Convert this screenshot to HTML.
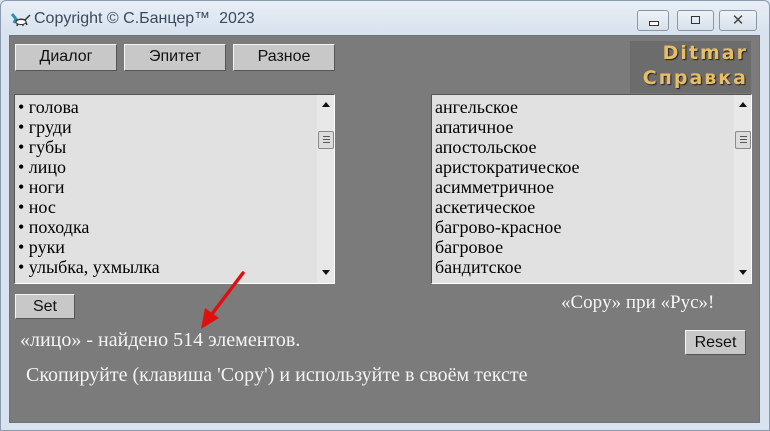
<!DOCTYPE html>
<html><head><meta charset="utf-8"><style>
*{margin:0;padding:0;box-sizing:border-box}
body{width:770px;height:431px;background:#dce6f2;position:relative;overflow:hidden;font-family:"Liberation Sans",sans-serif}
.frame{position:absolute;left:0;top:0;width:770px;height:431px;border:1px solid #8a9bb0;border-radius:6px 6px 0 0;background:linear-gradient(#e8eef6,#d9e3ef 30px,#d9e3ef)}
.title{position:absolute;left:34px;top:10px;font-size:16px;color:#3a4a5e}
.client{position:absolute;left:9px;top:35px;width:751px;height:388px;background:#7b7b7b;border:1px solid #6a7380}
.wb{position:absolute;top:10px;height:21px;border:1px solid #8a96a6;border-radius:3px;background:linear-gradient(#eef3f9,#d7e0ea)}
.btn{position:absolute;background:#c8c8c8;border:1px solid;border-color:#f4f4f4 #555 #555 #f4f4f4;font-size:16px;text-align:center;color:#111;line-height:24px}
.list{position:absolute;top:94px;width:321px;height:190px;background:#e1e1e1;border:1px solid;border-color:#555 #fff #fff #555;font-family:"Liberation Serif",serif;font-size:18px;color:#000}
.list div.it{height:20px;line-height:20px;padding-left:3px;white-space:nowrap}
.items{padding-top:2px}
.sb{position:absolute;right:0;top:0;width:17px;height:188px;background:#e8e8e8}
.sb .up,.sb .dn{position:absolute;left:5px;width:0;height:0;border-left:4px solid transparent;border-right:4px solid transparent}
.sb .up{top:7px;border-bottom:5px solid #111}
.sb .dn{bottom:8px;border-top:5px solid #111}
.thumb{position:absolute;left:1px;top:36px;width:16px;height:18px;background:#dcdcdc;border:1px solid #888;border-radius:2px}
.thumb i{position:absolute;left:4px;width:7px;height:1px;background:#555}
.txt{position:absolute;font-family:"Liberation Serif",serif;color:#f4f4f4;font-size:20px;white-space:nowrap}
.logo{position:absolute;left:630px;top:41px;width:121px;height:52px;background:#6c6c6c;font-family:"DejaVu Sans",sans-serif;font-weight:bold;color:#e8bd66;text-shadow:1px 1px 1px #222;letter-spacing:2px;font-size:19px;line-height:25px;text-align:right;padding-right:3px}
</style></head><body>
<div class="frame"></div>
<svg style="position:absolute;left:10px;top:11px" width="22" height="18" viewBox="0 0 22 18"><path d="M2 3 L6 8 L4 12" stroke="#2a8fb0" stroke-width="3" fill="none"/><path d="M6 10 Q10 7 15 9 L18 6 L20 4 M15 9 L17 14 M8 11 L7 15 M12 11 L13 15" stroke="#333" stroke-width="1.5" fill="none"/><ellipse cx="11" cy="11" rx="5" ry="2.5" fill="#fff" stroke="#333"/></svg>
<div class="title">Copyright © С.Банцер™&nbsp; 2023</div>
<div class="wb" style="left:637px;width:32px"><div style="position:absolute;left:11px;top:10px;width:10px;height:5px;border:1px solid #333;background:#fff"></div></div>
<div class="wb" style="left:677px;width:37px"><div style="position:absolute;left:13px;top:5px;width:9px;height:8px;border:1px solid #333"></div></div>
<div class="wb" style="left:719px;width:38px;text-align:center;font-size:15px;line-height:19px;color:#444">✕</div>
<div class="client"></div>
<div class="btn" style="left:15px;top:44px;width:102px;height:27px">Диалог</div>
<div class="btn" style="left:124px;top:44px;width:102px;height:27px">Эпитет</div>
<div class="btn" style="left:233px;top:44px;width:102px;height:27px">Разное</div>
<div class="logo">Ditmar<br>Справка</div>
<div class="list" style="left:14px">
<div class="items"><div class="it">• голова</div><div class="it">• груди</div><div class="it">• губы</div><div class="it">• лицо</div><div class="it">• ноги</div><div class="it">• нос</div><div class="it">• походка</div><div class="it">• руки</div><div class="it">• улыбка, ухмылка</div></div>
<div class="sb"><div class="up"></div><div class="thumb"><i style="top:4px"></i><i style="top:7px"></i><i style="top:10px"></i></div><div class="dn"></div></div>
</div>
<div class="list" style="left:431px">
<div class="items"><div class="it">ангельское</div><div class="it">апатичное</div><div class="it">апостольское</div><div class="it">аристократическое</div><div class="it">асимметричное</div><div class="it">аскетическое</div><div class="it">багрово-красное</div><div class="it">багровое</div><div class="it">бандитское</div></div>
<div class="sb"><div class="up"></div><div class="thumb"><i style="top:4px"></i><i style="top:7px"></i><i style="top:10px"></i></div><div class="dn"></div></div>
</div>
<div class="btn" style="left:15px;top:294px;width:60px;height:25px">Set</div>
<div class="btn" style="left:685px;top:330px;width:61px;height:25px">Reset</div>
<div class="txt" style="left:561px;top:292px;font-size:19px">«Copy» при «Рус»!</div>
<div class="txt" style="left:20px;top:329px">«лицо» - найдено 514 элементов.</div>
<div class="txt" style="left:26px;top:364px">Скопируйте (клавиша 'Copy') и используйте в своём тексте</div>
<svg style="position:absolute;left:0;top:0" width="770" height="431"><line x1="243" y1="273" x2="212" y2="314" stroke="#e01010" stroke-width="3.5" stroke-linecap="round"/><polygon points="201,329 205,308 219,318" fill="#e01010"/></svg>
</body></html>
